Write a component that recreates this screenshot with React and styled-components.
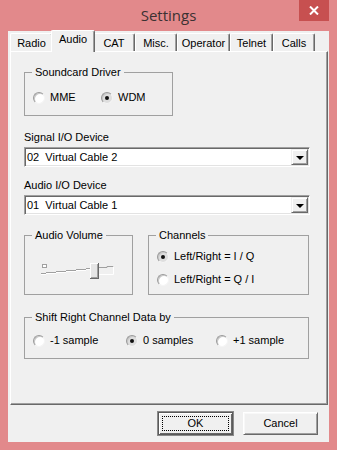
import styled, { createGlobalStyle } from "styled-components";

const GlobalStyle = createGlobalStyle`
  html, body {
    margin: 0;
    padding: 0;
  }
  body {
    width: 337px;
    height: 450px;
    overflow: hidden;
    font-family: "Liberation Sans", Arial, sans-serif;
    font-size: 11px;
    color: #000;
  }
`;

const Window = styled.div`
  width: 337px;
  height: 450px;
  box-sizing: border-box;
  padding: 0 8px 8px;
  background: #e2898b;
  display: flex;
  flex-direction: column;
`;

const TitleBar = styled.div`
  height: 31px;
  display: grid;
  grid-template-columns: 30px 1fr 30px;
`;

const Title = styled.div`
  grid-column: 2;
  text-align: center;
  font-family: "Open Sans", "Noto Sans", sans-serif;
  font-size: 15px;
  line-height: 30px;
  color: #3b3132;
`;

const CloseButton = styled.div`
  grid-column: 3;
  height: 21px;
  background: #c75050;
  display: flex;
  align-items: center;
  justify-content: center;
`;

const Client = styled.div`
  flex: 1;
  background: #f0f0f0;
  display: flex;
  flex-direction: column;
`;

const TabStrip = styled.div`
  height: 20px;
  padding-left: 2px;
  display: flex;
  align-items: flex-end;
`;

const Tab = styled.div`
  box-sizing: border-box;
  width: ${(p) => p.$w}px;
  height: ${(p) => (p.$active ? 22 : 18)}px;
  margin: ${(p) => (p.$active ? "0 -2px -1px" : "0")};
  padding-top: ${(p) => (p.$active ? 2 : 3)}px;
  position: relative;
  z-index: ${(p) => (p.$active ? 2 : 0)};
  background: #f0f0f0;
  border-top: 1px solid #fff;
  border-left: 1px solid #fff;
  border-right: 1px solid #696969;
  border-radius: 2px 2px 0 0;
  box-shadow: inset -1px 0 #a0a0a0;
  text-align: center;
  line-height: 13px;
  white-space: nowrap;
`;

const Panel = styled.div`
  height: 354px;
  box-sizing: border-box;
  margin: 0 1px 0 2px;
  padding: 14px 0 0 13px;
  border-top: 1px solid #fff;
  border-left: 1px solid #fff;
  border-right: 1px solid #696969;
  border-bottom: 1px solid #696969;
  box-shadow: inset -1px -1px #a0a0a0;
  display: flex;
  flex-direction: column;
  align-items: flex-start;
`;

const Group = styled.fieldset`
  box-sizing: border-box;
  width: ${(p) => p.$w}px;
  min-width: 0;
  margin: ${(p) => p.$mt || 0}px 0 0;
  padding: ${(p) => p.$pt}px 8px ${(p) => p.$pb}px;
  border: 1px solid #a0a0a0;
  border-radius: 0;
  display: flex;
  flex-direction: ${(p) => (p.$column ? "column" : "row")};
  gap: ${(p) => p.$gap || 0}px;
`;

const Legend = styled.legend`
  padding: 0 3px;
  margin-left: -1px;
  line-height: 13px;
`;

const Radio = styled.label`
  display: flex;
  align-items: center;
  gap: 5px;
  height: 13px;
  line-height: 13px;
  width: ${(p) => (p.$w ? `${p.$w}px` : "auto")};
  flex: none;
  white-space: nowrap;
`;

const RadioCircle = styled.span`
  width: 12px;
  height: 12px;
  box-sizing: border-box;
  border-radius: 50%;
  border: 1px solid;
  border-color: #9a9a9a #f4f4f4 #f4f4f4 #9a9a9a;
  background: ${(p) => (p.$checked ? "#dedede" : "#fff")};
  box-shadow: inset 1px 1px #c8c8c8;
  display: flex;
  align-items: center;
  justify-content: center;
  &::after {
    content: "";
    width: 4px;
    height: 4px;
    border-radius: 50%;
    background: ${(p) => (p.$checked ? "#111" : "transparent")};
  }
`;

const FieldLabel = styled.div`
  margin-top: ${(p) => p.$mt}px;
  line-height: 13px;
`;

const Combo = styled.div`
  box-sizing: border-box;
  width: 286px;
  height: 20px;
  margin-top: ${(p) => p.$mt}px;
  background: #fff;
  border: 1px solid;
  border-color: #a0a0a0 #fff #fff #a0a0a0;
  box-shadow: inset 1px 1px #696969, inset -1px -1px #e3e3e3;
  padding: 1px 1px 1px 2px;
  display: flex;
  align-items: center;
  justify-content: space-between;
`;

const ComboText = styled.span`
  white-space: pre;
  line-height: 13px;
`;

const ComboArrow = styled.div`
  box-sizing: border-box;
  width: 17px;
  height: 16px;
  background: #f0f0f0;
  border: 1px solid;
  border-color: #f0f0f0 #696969 #696969 #f0f0f0;
  box-shadow: inset 1px 1px #fff, inset -1px -1px #a0a0a0;
  display: flex;
  align-items: center;
  justify-content: center;
  &::after {
    content: "";
    border-left: 4px solid transparent;
    border-right: 4px solid transparent;
    border-top: 4px solid #000;
    margin-top: 1px;
  }
`;

const GroupRow = styled.div`
  display: flex;
  gap: 15px;
  margin-top: 14px;
`;

const Slider = styled.svg`
  display: block;
  margin-left: 6px;
`;

const ButtonRow = styled.div`
  height: 23px;
  padding: 7px 11px 7px 0;
  display: flex;
  justify-content: flex-end;
  align-items: center;
  gap: 10px;
`;

const Button = styled.div`
  box-sizing: border-box;
  width: 75px;
  height: 23px;
  background: #f0f0f0;
  border: 1px solid;
  border-color: ${(p) => (p.$default ? "#5a5a5a" : "#fff #696969 #696969 #fff")};
  box-shadow: ${(p) =>
    p.$default
      ? "inset 1px 1px #fff, inset -1px -1px #696969, 0 0 0 1px #8a8a8a"
      : "inset 1px 1px #f8f8f8, inset -1px -1px #a0a0a0"};
  display: flex;
  padding: 3px;
  line-height: 13px;
`;

const FocusRect = styled.span`
  flex: 1;
  display: flex;
  align-items: center;
  justify-content: center;
  border: 1px dotted ${(p) => (p.$on ? "#000" : "transparent")};
`;

const tabs = [
  ["Radio", 43],
  ["Audio", 44],
  ["CAT", 42],
  ["Misc.", 42],
  ["Operator", 53],
  ["Telnet", 43],
  ["Calls", 42],
];

const RadioOption = ({ label, checked, w }) => (
  <Radio $w={w}>
    <RadioCircle $checked={checked} />
    {label}
  </Radio>
);

const App = () => {
  return (
    <Window>
      <GlobalStyle />
      <TitleBar>
        <Title>Settings</Title>
        <CloseButton>
          <svg width="10" height="9" viewBox="0 0 10 9">
            <path d="M1 0.5 L9 8.5 M9 0.5 L1 8.5" stroke="#fff" strokeWidth="2" />
          </svg>
        </CloseButton>
      </TitleBar>
      <Client>
        <TabStrip>
          {tabs.map(([name, w]) => (
            <Tab key={name} $w={w} $active={name === "Audio"}>
              {name}
            </Tab>
          ))}
        </TabStrip>
        <Panel>
          <Group $w={149} $pt={12} $pb={11}>
            <Legend>Soundcard Driver</Legend>
            <RadioOption label="MME" w={68} />
            <RadioOption label="WDM" checked />
          </Group>

          <FieldLabel $mt={15}>Signal I/O Device</FieldLabel>
          <Combo $mt={3}>
            <ComboText>02  Virtual Cable 2</ComboText>
            <ComboArrow />
          </Combo>

          <FieldLabel $mt={12}>Audio I/O Device</FieldLabel>
          <Combo $mt={3}>
            <ComboText>01  Virtual Cable 1</ComboText>
            <ComboArrow />
          </Combo>

          <GroupRow>
            <Group $w={109} $pt={20} $pb={10}>
              <Legend>Audio Volume</Legend>
              <Slider width="76" height="18" viewBox="0 0 76 18">
                <rect x="3.5" y="2.5" width="4" height="3" fill="#fff" stroke="#a0a0a0" />
                <path
                  d="M2 11.5 H7 M7 10.5 H17 M17 9.5 H27 M27 8.5 H37 M37 7.5 H47 M47 6.5 H52"
                  stroke="#a0a0a0"
                  fill="none"
                />
                <path
                  d="M2 12.5 H7 M7 11.5 H17 M17 10.5 H27 M27 9.5 H37 M37 8.5 H47 M47 7.5 H52"
                  stroke="#fff"
                  fill="none"
                />
                <path d="M60 5.5 H68 V4.5 H74.5" stroke="#a0a0a0" fill="none" />
                <path d="M74.5 4.5 V12.5 H60" stroke="#fff" fill="none" />
                <rect x="51" y="1" width="9" height="16" fill="#696969" />
                <rect x="51" y="1" width="8" height="15" fill="#fff" />
                <rect x="52" y="2" width="7" height="14" fill="#a0a0a0" />
                <rect x="52" y="2" width="6" height="13" fill="#e6e6e6" />
              </Slider>
            </Group>
            <Group $w={161} $pt={8} $pb={8} $column $gap={10}>
              <Legend>Channels</Legend>
              <RadioOption label="Left/Right = I / Q" checked />
              <RadioOption label="Left/Right = Q / I" />
            </Group>
          </GroupRow>

          <Group $w={285} $mt={16} $pt={10} $pb={11}>
            <Legend>Shift Right Channel Data by</Legend>
            <RadioOption label="-1 sample" w={93} />
            <RadioOption label="0 samples" checked w={90} />
            <RadioOption label="+1 sample" />
          </Group>
        </Panel>
        <ButtonRow>
          <Button $default>
            <FocusRect $on>OK</FocusRect>
          </Button>
          <Button>
            <FocusRect>Cancel</FocusRect>
          </Button>
        </ButtonRow>
      </Client>
    </Window>
  );
};

export default App;
